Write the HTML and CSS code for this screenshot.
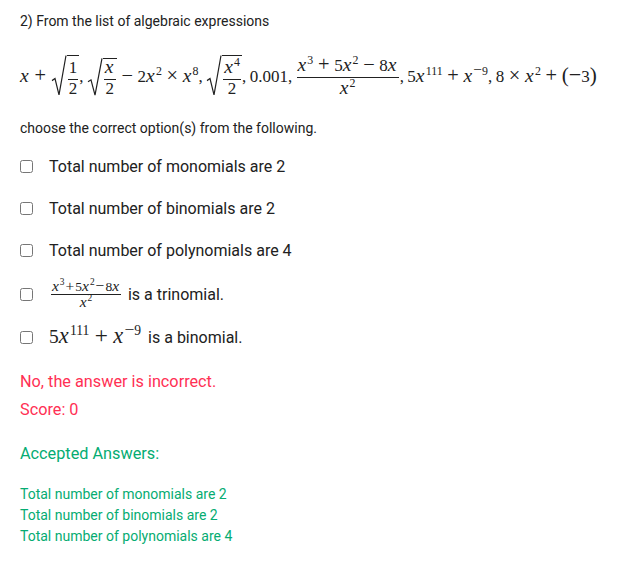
FILE: index.html
```html
<!DOCTYPE html>
<html lang="en">
<head>
<meta charset="UTF-8">
<title>Question 2</title>
<link rel="stylesheet" href="styles.css">
</head>
<body>

<div class="question">
  <p class="stem">2) From the list of algebraic expressions</p>

  <p class="math expr"><i>x</i><span class="op">+</span><span class="root"><svg class="radical" viewBox="0 0 16 40" preserveAspectRatio="none"><path d="M1 25 L4 23 L8 39 L15 .5" /></svg><span class="radicand"><span class="frac"><span class="num">1</span><span class="den">2</span></span></span></span><span class="comma">,</span><span class="root low"><svg class="radical" viewBox="0 0 16 40" preserveAspectRatio="none"><path d="M1 25 L4 23 L8 39 L15 .5" /></svg><span class="radicand"><span class="frac"><span class="num"><i>x</i></span><span class="den">2</span></span></span></span><span class="op">−</span>2<i>x</i><sup>2</sup><span class="op">×</span><i>x</i><sup>8</sup><span class="comma">,</span><span class="root"><svg class="radical" viewBox="0 0 16 40" preserveAspectRatio="none"><path d="M1 25 L4 23 L8 39 L15 .5" /></svg><span class="radicand"><span class="frac"><span class="num"><i>x</i><sup>4</sup></span><span class="den">2</span></span></span></span><span class="comma">,</span>0.001<span class="comma">,</span><span class="frac big"><span class="num"><i>x</i><sup>3</sup><span class="op">+</span>5<i>x</i><sup>2</sup><span class="op">−</span>8<i>x</i></span><span class="den"><i>x</i><sup>2</sup></span></span><span class="comma">,</span>5<i>x</i><sup>111</sup><span class="op">+</span><i>x</i><sup><span class="minus">−</span>9</sup><span class="comma">,</span>8<span class="op">×</span><i>x</i><sup>2</sup><span class="op">+</span><span class="paren">(</span><span class="minus">−</span>3<span class="paren">)</span></p>

  <p class="stem prompt">choose the correct option(s) from the following.</p>

  <div class="options">
    <label class="option"><input type="checkbox"><span>Total number of monomials are 2</span></label>
    <label class="option"><input type="checkbox"><span>Total number of binomials are 2</span></label>
    <label class="option"><input type="checkbox"><span>Total number of polynomials are 4</span></label>
    <label class="option tall"><input type="checkbox"><span class="opt-text"><span class="math small"><span class="frac"><span class="num"><i>x</i><sup>3</sup><span class="tight">+</span>5<i>x</i><sup>2</sup><span class="tight">−</span>8<i>x</i></span><span class="den"><i>x</i><sup>2</sup></span></span></span> is a trinomial.</span></label>
    <label class="option after-tall"><input type="checkbox"><span><span class="math inline">5<i>x</i><sup>111</sup><span class="op">+</span><i>x</i><sup><span class="minus">−</span>9</sup></span> is a binomial.</span></label>
  </div>

  <p class="wrong">No, the answer is incorrect.</p>
  <p class="wrong score">Score: 0</p>

  <p class="accepted">Accepted Answers:</p>
  <ul class="answers">
    <li>Total number of monomials are 2</li>
    <li>Total number of binomials are 2</li>
    <li>Total number of polynomials are 4</li>
  </ul>
</div>

</body>
</html>
```

FILE: styles.css
```css
body {
  margin: 0;
  background: #fff;
  font-family: Roboto, sans-serif;
  color: #212121;
}

p {
  margin: 0;
}

.question {
  padding: 13px 20px 0;
}

.stem {
  font-size: 14px;
  line-height: 16px;
}

.prompt {
  margin-top: 11px;
}

.math {
  font-family: "Liberation Serif", serif;
  white-space: nowrap;
}

.math i {
  font-style: italic;
  font-size: 1.15em;
  letter-spacing: 0.06em;
  line-height: 0;
}

.math sup {
  font-size: 0.7em;
  line-height: 0;
  vertical-align: 0.6em;
}

.op {
  font-size: 1.2em;
  line-height: 0;
  margin: 0 0.23em;
}

.minus {
  font-size: 1.3em;
  line-height: 0;
}

.tight {
  font-size: 1.15em;
  line-height: 0;
  margin: 0 1px;
}

.comma {
  margin-right: 0.2em;
}

.paren {
  font-size: 1.25em;
  line-height: 0;
}

.expr {
  font-size: 17px;
  height: 64px;
  line-height: 64px;
  margin-top: 16px;
}

.frac {
  display: inline-flex;
  flex-direction: column;
  align-items: center;
  vertical-align: middle;
  line-height: 16px;
}

.big {
  margin: 0 1px 2px;
}

.num {
  padding: 0 1px 3px;
  border-bottom: 1px solid #212121;
}

.den {
  padding-top: 3px;
}

.root {
  display: inline-flex;
  vertical-align: middle;
  line-height: 16px;
  margin-bottom: 5px;
}

.root .den {
  padding-top: 2px;
  line-height: 14px;
}

.low {
  padding-top: 3px;
}

.radical {
  width: 16px;
  height: 41px;
  fill: none;
  stroke: #212121;
  stroke-width: 1.2;
}

.low .radical {
  height: 38px;
}

.radicand {
  display: flex;
  align-items: flex-end;
  height: 41px;
  box-sizing: border-box;
  border-top: 1px solid #212121;
  padding: 0 1px;
}

.low .radicand {
  height: 38px;
}

.options {
  margin-top: 21px;
  display: flex;
  flex-direction: column;
  gap: 23px;
}

.option {
  display: flex;
  align-items: center;
  gap: 16px;
  font-size: 16px;
  height: 19px;
}

.option input {
  margin: 0;
  flex: none;
}

.opt-text {
  display: flex;
  align-items: center;
  gap: 5px;
}

.tall {
  margin-top: 2px;
}

.after-tall {
  margin-top: 1px;
}

.small {
  font-size: 13.5px;
  margin: 0 2px;
}

.small .frac {
  line-height: 13px;
}

.small .num {
  padding-bottom: 1px;
}

.small .den {
  padding-top: 1px;
}

.inline {
  font-size: 19.4px;
  line-height: 0;
  margin-right: 3px;
}

.wrong {
  margin-top: 25px;
  font-size: 16.25px;
  line-height: 19px;
  color: #ff3054;
}

.score {
  margin-top: 9px;
}

.accepted {
  margin-top: 25px;
  font-size: 16.25px;
  line-height: 19px;
  color: #05ac72;
}

.answers {
  list-style: none;
  margin: 21px 0 0;
  padding: 0;
  font-size: 14px;
  line-height: 21px;
  color: #05ac72;
}
```
